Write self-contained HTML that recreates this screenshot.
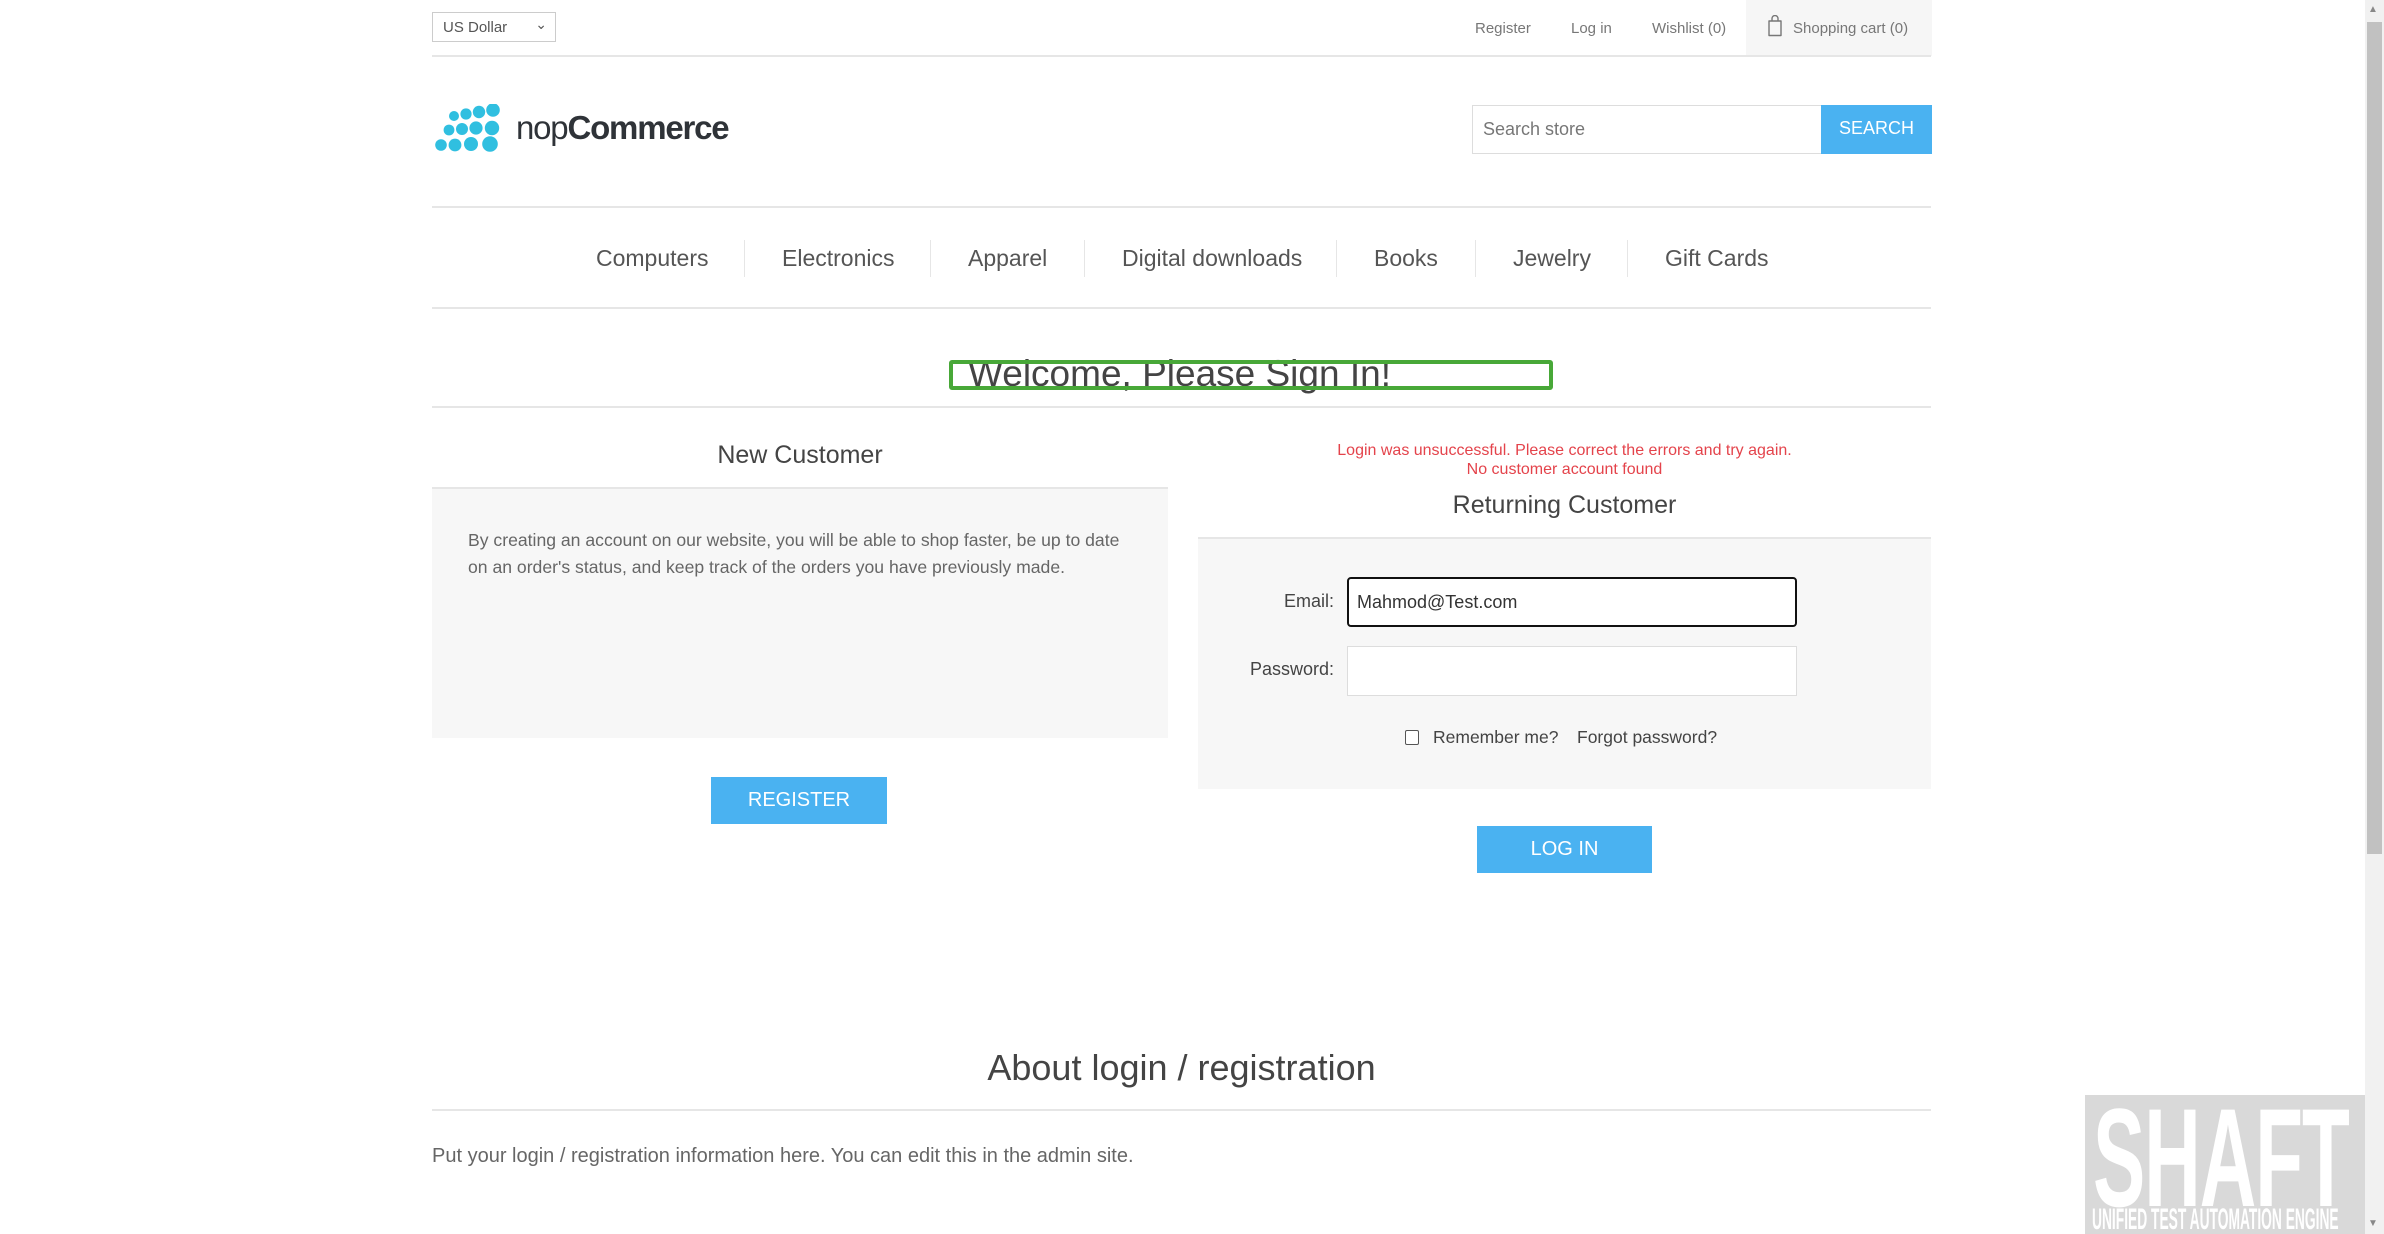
<!DOCTYPE html>
<html><head><meta charset="utf-8"><style>
*{margin:0;padding:0;box-sizing:border-box}
body{width:2384px;height:1234px;overflow:hidden;background:#fff;font-family:"Liberation Sans",Arial,sans-serif;color:#444;position:relative}
.a{position:absolute;white-space:nowrap}
.line{position:absolute;left:432px;width:1499px;height:2px;background:#e6e6e6}
.menu{top:245px;font-size:23px;color:#555}
.sep{position:absolute;top:240px;width:1px;height:37px;background:#e6e6e6}
.btn{position:absolute;background:#4ab2f1;color:#fff;font-size:20px;text-align:center}
</style></head><body>
<div class="a" style="left:432px;top:12px;width:124px;height:30px;border:1px solid #ccc;font-size:15px;color:#555;padding:6px 0 0 10px">US Dollar<span style="position:absolute;right:8px;top:3px;font-size:14px">&#8964;</span></div>
<div class="a" style="left:1475px;top:20px;font-size:15px;color:#777">Register</div>
<div class="a" style="left:1571px;top:20px;font-size:15px;color:#777">Log in</div>
<div class="a" style="left:1652px;top:20px;font-size:15px;color:#777">Wishlist (0)</div>
<div class="a" style="left:1746px;top:0;width:186px;height:56px;background:#f6f6f6"></div>
<svg class="a" style="left:1767px;top:15px" width="16" height="22" viewBox="0 0 16 22"><path d="M5 6V3.5a3 3 0 0 1 6 0V6M2 6h12v14.5H2z" fill="none" stroke="#777" stroke-width="1.4" stroke-linejoin="round"/></svg>
<div class="a" style="left:1793px;top:20px;font-size:15px;color:#777">Shopping cart (0)</div>
<div class="line" style="top:55px"></div>
<svg class="a" style="left:434px;top:104px" width="74" height="56" viewBox="0 0 74 56">
<g fill="#30bfe0">
<circle cx="20" cy="12" r="5"/><circle cx="32" cy="10" r="5.6"/><circle cx="45" cy="8" r="6.2"/><circle cx="59" cy="6" r="6.8"/>
<circle cx="15" cy="26" r="5.4"/><circle cx="28" cy="25" r="6"/><circle cx="42" cy="24" r="6.6"/><circle cx="58" cy="24" r="7.2"/>
<circle cx="7" cy="41" r="5.8"/><circle cx="21" cy="41" r="6.4"/><circle cx="37" cy="40" r="7"/><circle cx="56" cy="40" r="7.8"/>
</g></svg>
<div class="a" style="left:516px;top:109px;font-size:33px;color:#2f3338;letter-spacing:-1.2px"><span style="font-weight:normal">nop</span><b>Commerce</b></div>
<div class="a" style="left:1472px;top:105px;width:350px;height:49px;border:1px solid #ddd;font-size:18px;color:#777;padding:13px 0 0 10px">Search store</div>
<div class="btn" style="left:1821px;top:105px;width:111px;height:49px;font-size:18px;padding-top:13px">SEARCH</div>
<div class="line" style="top:206px"></div>
<div class="a menu" style="left:596px">Computers</div>
<div class="sep" style="left:744px"></div>
<div class="a menu" style="left:782px">Electronics</div>
<div class="sep" style="left:930px"></div>
<div class="a menu" style="left:968px">Apparel</div>
<div class="sep" style="left:1084px"></div>
<div class="a menu" style="left:1122px">Digital downloads</div>
<div class="sep" style="left:1336px"></div>
<div class="a menu" style="left:1374px">Books</div>
<div class="sep" style="left:1475px"></div>
<div class="a menu" style="left:1513px">Jewelry</div>
<div class="sep" style="left:1627px"></div>
<div class="a menu" style="left:1665px">Gift Cards</div>
<div class="line" style="top:307px"></div>
<div class="a" style="left:968px;top:353px;font-size:37px;color:#444">Welcome, Please Sign In!</div>
<div class="a" style="left:949px;top:360px;width:604px;height:30px;border:4px solid #48a838;border-radius:3px"></div>
<div class="line" style="top:406px"></div>
<div class="a" style="left:432px;top:441px;width:736px;text-align:center;font-size:25px">New Customer</div>
<div class="a" style="left:432px;top:487px;width:736px;height:251px;background:#f7f7f7;border-top:2px solid #e6e6e6"></div>
<div class="a" style="left:468px;top:527px;font-size:17.6px;line-height:27px;color:#666">By creating an account on our website, you will be able to shop faster, be up to date<br>on an order's status, and keep track of the orders you have previously made.</div>
<div class="btn" style="left:711px;top:777px;width:176px;height:47px;padding-top:12px">REGISTER</div>
<div class="a" style="left:1198px;top:441px;width:733px;text-align:center;font-size:16px;line-height:19px;color:#e4434b">Login was unsuccessful. Please correct the errors and try again.<br>No customer account found</div>
<div class="a" style="left:1198px;top:491px;width:733px;text-align:center;font-size:25px">Returning Customer</div>
<div class="a" style="left:1198px;top:537px;width:733px;height:252px;background:#f7f7f7;border-top:2px solid #e6e6e6"></div>
<div class="a" style="left:1234px;top:591px;width:100px;text-align:right;font-size:18px">Email:</div>
<div class="a" style="left:1347px;top:577px;width:450px;height:50px;background:#fff;border:2px solid #111;border-radius:4px;font-size:18px;padding:13px 0 0 8px;color:#333">Mahmod@Test.com</div>
<div class="a" style="left:1234px;top:659px;width:100px;text-align:right;font-size:18px">Password:</div>
<div class="a" style="left:1347px;top:646px;width:450px;height:50px;background:#fff;border:1px solid #ddd"></div>
<div class="a" style="left:1405px;top:730px;width:14px;height:15px;border:1px solid #555;border-radius:2px;background:#fff"></div>
<div class="a" style="left:1433px;top:727px;font-size:17.5px">Remember me?</div>
<div class="a" style="left:1577px;top:727px;font-size:17.5px">Forgot password?</div>
<div class="btn" style="left:1477px;top:826px;width:175px;height:47px;padding-top:12px">LOG IN</div>
<div class="a" style="left:432px;top:1047px;width:1499px;text-align:center;font-size:36px">About login / registration</div>
<div class="line" style="top:1109px"></div>
<div class="a" style="left:432px;top:1145px;font-size:20px;color:#666">Put your login / registration information here. You can edit this in the admin site.</div>
<div class="a" style="left:2085px;top:1095px;width:299px;height:139px;background:#d9d9d9;overflow:hidden">
<div class="a" style="left:8px;top:-18px;font-size:140px;font-weight:bold;color:#fff;transform:scaleX(0.56);transform-origin:left top;letter-spacing:-2px">SHAFT</div>
<div class="a" style="left:7px;top:108px;font-size:30px;font-weight:bold;color:#fff;transform:scaleX(0.46);transform-origin:left top">UNIFIED TEST AUTOMATION ENGINE</div>
</div>
<div class="a" style="left:2365px;top:0;width:19px;height:1234px;background:#f1f1f1"></div>
<div class="a" style="left:2367px;top:22px;width:15px;height:832px;background:#c1c1c1"></div>
<div class="a" style="left:2368px;top:4px;font-size:10px;color:#888">&#9650;</div>
<div class="a" style="left:2368px;top:1218px;font-size:10px;color:#888">&#9660;</div>
</body></html>
